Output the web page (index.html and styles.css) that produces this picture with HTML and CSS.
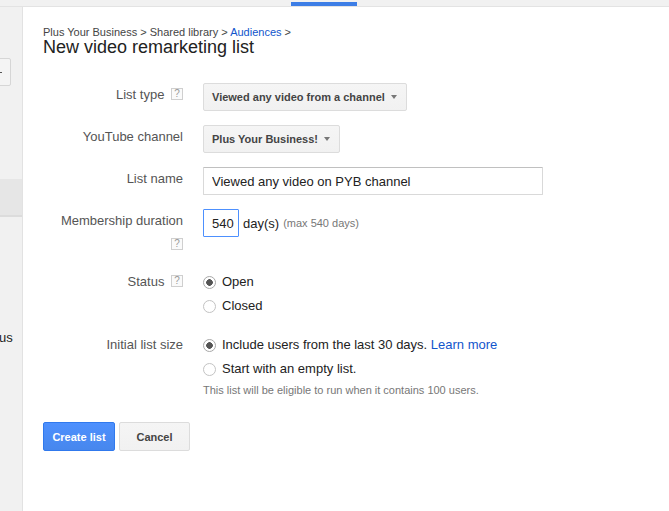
FILE: index.html
```html
<!DOCTYPE html>
<html>
<head>
<meta charset="utf-8">
<title>New video remarketing list</title>
<link rel="stylesheet" href="styles.css">
</head>
<body>
<div class="topbar"><div class="tab-indicator"></div></div>
<div class="layout">
  <aside class="sidebar">
    <div class="side-btn"><span class="side-btn-mark"></span></div>
    <div class="side-item"></div>
    <div class="side-text">us</div>
  </aside>
  <main class="content">
    <div class="breadcrumb">Plus Your Business &gt; Shared library &gt; <a class="link" href="#">Audiences</a> &gt;</div>
    <h1 class="title">New video remarketing list</h1>

    <div class="form">
      <div class="label">List type <span class="help">?</span></div>
      <div class="control">
        <div class="dropdown">Viewed any video from a channel<span class="caret"></span></div>
      </div>

      <div class="label">YouTube channel</div>
      <div class="control">
        <div class="dropdown">Plus Your Business!<span class="caret"></span></div>
      </div>

      <div class="label">List name</div>
      <div class="control">
        <input class="text-input name-input" type="text" value="Viewed any video on PYB channel">
      </div>

      <div class="label">Membership duration<br><span class="help">?</span></div>
      <div class="control duration">
        <input class="text-input days-input" type="text" value="540">
        <span class="days">day(s)</span>
        <span class="hint">(max 540 days)</span>
      </div>

      <div class="label raise">Status <span class="help">?</span></div>
      <div class="control raise">
        <div class="option"><span class="radio checked"></span>Open</div>
        <div class="option"><span class="radio"></span>Closed</div>
      </div>

      <div class="label">Initial list size</div>
      <div class="control">
        <div class="option"><span class="radio checked"></span>Include users from the last 30 days.&nbsp;<a class="link" href="#">Learn more</a></div>
        <div class="option"><span class="radio"></span>Start with an empty list.</div>
        <div class="note">This list will be eligible to run when it contains 100 users.</div>
      </div>
    </div>

    <div class="actions">
      <button class="btn btn-primary" type="button">Create list</button>
      <button class="btn btn-default" type="button">Cancel</button>
    </div>
  </main>
</div>
</body>
</html>
```
FILE: styles.css
```css
html, body {
  margin: 0;
  padding: 0;
  background: #fff;
  font-family: "Liberation Sans", Arial, sans-serif;
  color: #222;
}

body {
  width: 669px;
  height: 511px;
  overflow: hidden;
}

.topbar {
  height: 6px;
  background: #f1f1f1;
  border-bottom: 1px solid #e3e3e3;
  display: flex;
}

.tab-indicator {
  margin-left: 291px;
  margin-top: 2px;
  width: 66px;
  height: 4px;
  background: #3d7ee6;
}

.layout {
  display: flex;
  height: 504px;
}

.sidebar {
  width: 22px;
  flex: none;
  background: #f1f1f1;
  border-right: 1px solid #e2e2e2;
  display: flex;
  flex-direction: column;
  overflow: hidden;
}

.side-btn {
  margin-top: 51px;
  margin-left: -3px;
  width: 12px;
  height: 26px;
  border: 1px solid #d6d6d6;
  border-radius: 2px;
  background: #f4f4f4;
  display: flex;
  align-items: center;
}

.side-btn-mark {
  display: block;
  width: 2px;
  height: 1px;
  margin-left: 2px;
  background: #555;
}

.side-item {
  margin-top: 93px;
  height: 36px;
  background: #e6e6e6;
  border-bottom: 2px solid #dcdcdc;
}

.side-text {
  margin-top: 113px;
  margin-left: -1px;
  font-size: 13px;
  line-height: 15px;
  color: #222;
}

.content {
  flex: 1;
  padding: 20px 0 0 20px;
}

.breadcrumb {
  font-size: 11px;
  line-height: 11px;
  color: #444;
}

.link {
  color: #15c;
  text-decoration: none;
}

.title {
  margin: 0;
  font-size: 18px;
  line-height: 19px;
  font-weight: normal;
  color: #222;
}

.form {
  margin-top: 26px;
  display: grid;
  grid-template-columns: 140px 1fr;
  column-gap: 20px;
  row-gap: 14px;
}

.label {
  text-align: right;
  font-size: 13px;
  line-height: 24px;
  color: #555;
}

.raise {
  margin-top: -1px;
  margin-bottom: 1px;
}

.help {
  display: inline-block;
  box-sizing: border-box;
  width: 12px;
  height: 12px;
  margin-left: 3px;
  border: 1px solid #cfcfcf;
  background: #fafafa;
  color: #999;
  font-size: 10px;
  line-height: 10px;
  text-align: center;
  overflow: hidden;
  vertical-align: -1px;
}

.control {
  align-self: start;
  font-size: 13px;
}

.dropdown {
  display: inline-flex;
  align-items: center;
  box-sizing: border-box;
  height: 28px;
  padding: 0 9px 0 8px;
  border: 1px solid #dcdcdc;
  border-radius: 2px;
  background: linear-gradient(#f5f5f5, #f1f1f1);
  color: #444;
  font-size: 11px;
  font-weight: bold;
}

.caret {
  display: inline-block;
  margin-left: 6px;
  width: 0;
  height: 0;
  border-left: 3px solid transparent;
  border-right: 3px solid transparent;
  border-top: 4px solid #777;
}

.text-input {
  box-sizing: border-box;
  height: 28px;
  margin: 0;
  padding: 0 8px;
  border: 1px solid #d9d9d9;
  border-top-color: #c0c0c0;
  border-radius: 1px;
  font-family: "Liberation Sans", Arial, sans-serif;
  font-size: 13px;
  color: #222;
  background: #fff;
  outline: none;
}

.name-input {
  width: 340px;
  display: block;
}

.duration {
  display: flex;
  align-items: center;
}

.days-input {
  width: 36px;
  padding: 0 2px 0 8px;
  border: 1px solid #4d90fe;
}

.days {
  margin-left: 4px;
  color: #222;
}

.hint {
  margin-left: 4px;
  font-size: 11px;
  color: #777;
}

.option {
  display: flex;
  align-items: center;
  height: 24px;
  line-height: 24px;
  color: #222;
}

.radio {
  display: block;
  flex: none;
  box-sizing: border-box;
  width: 13px;
  height: 13px;
  margin-right: 6px;
  border: 1px solid #c3c3c3;
  border-radius: 50%;
  background: #fff;
}

.radio.checked {
  border-color: #a8a8a8;
  background: radial-gradient(circle, #555 0, #555 3px, #fff 3.6px);
}

.note {
  margin-top: 2px;
  font-size: 11px;
  line-height: 14px;
  color: #777;
}

.actions {
  margin-top: 25px;
  display: flex;
  gap: 4px;
}

.btn {
  box-sizing: border-box;
  height: 29px;
  min-width: 72px;
  padding: 0 8px;
  border-radius: 2px;
  font-family: "Liberation Sans", Arial, sans-serif;
  font-size: 11px;
  font-weight: bold;
  cursor: pointer;
}

.btn-primary {
  border: 1px solid #3079ed;
  background: linear-gradient(#4d90fe, #4787ed);
  color: #fff;
}

.btn-default {
  min-width: 71px;
  border: 1px solid #dcdcdc;
  background: linear-gradient(#f5f5f5, #f1f1f1);
  color: #444;
}
```
